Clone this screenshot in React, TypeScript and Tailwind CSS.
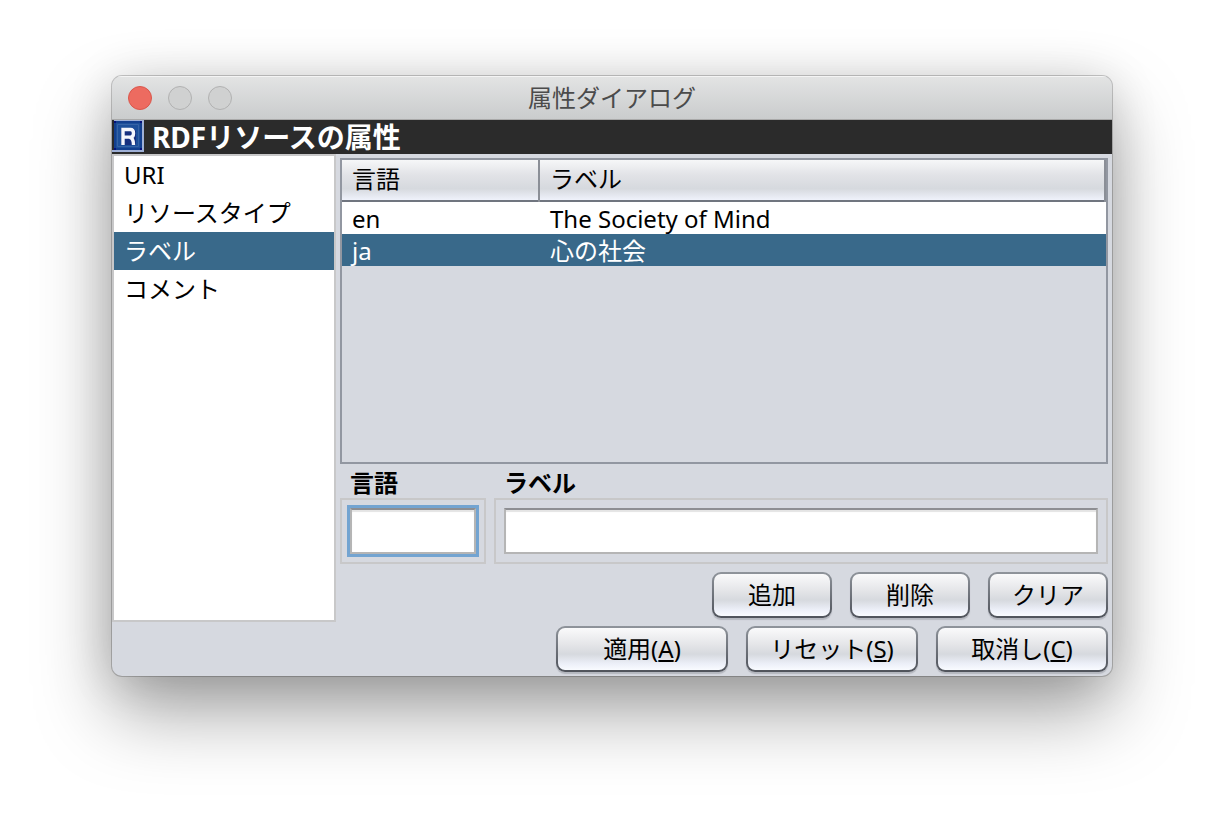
import { useState } from "react";
import type { ReactNode } from "react";

const sections = ["URI", "リソースタイプ", "ラベル", "コメント"];

const rows = [
  { lang: "en", label: "The Society of Mind" },
  { lang: "ja", label: "心の社会" },
];

function PushButton({ wide, children }: { wide?: boolean; children: ReactNode }) {
  return (
    <button
      type="button"
      className={
        "h-[46px] rounded-[9px] bg-linear-to-b from-[#8f949b] to-[#4f535b] p-[2px] shadow-[0_2px_1px_#b4b7bf] " +
        (wide ? "w-[172px]" : "w-[120px]")
      }
    >
      <span className="flex h-full items-center justify-center rounded-[7px] bg-[linear-gradient(#fafafb_0%,#e4e5e8_40%,#d6d9de_62%,#eceff8_85%,#f9fbff_100%)] whitespace-nowrap">
        <span>{children}</span>
      </span>
    </button>
  );
}

function ResourceIcon() {
  return (
    <svg viewBox="0 0 32 32" className="size-8 shrink-0" aria-hidden="true">
      <path d="M2 0h30v32H0v-2h2z" fill="#9fb0d6" />
      <path d="M2 1h28v29H2z" fill="#1c4f9a" />
      <path d="M3 2h26v27H3z" fill="none" stroke="#123f8f" strokeWidth="2" />
      <path d="M5.500 4.500h21v22h-21z" fill="none" stroke="#3563a6" strokeWidth="1" />
      <path d="M2 1h2v2H2zM28 1h2v2h-2zM2 28h2v2H2zM28 28h2v2h-2z" fill="#05107a" />
      <path d="M9 8h12l3 3v14H9z" fill="#16307f" />
      <path d="M11 25V9.500h7.500q3 0 3 3.800t-3 3.800H11M17.500 17.200q4 .5 4 7.800" fill="none" stroke="#f4f6fc" strokeWidth="3.400" />
    </svg>
  );
}

export default function App() {
  const [section, setSection] = useState("ラベル");
  const [selected, setSelected] = useState("ja");

  return (
    <main className="flex min-h-screen bg-white px-28 pt-[76px] pb-[148px] font-['Noto_Sans','Noto_Sans_CJK_JP',sans-serif] text-2xl leading-8 text-black">
      <section
        aria-labelledby="dialog-title"
        className="flex flex-1 flex-col overflow-hidden rounded-[10px] bg-[#d6d9e0] shadow-[0_0_0_1px_rgba(0,0,0,0.2),0_36px_76px_rgba(0,0,0,0.36),0_4px_48px_rgba(0,0,0,0.14)]"
      >
        <header className="grid h-11 shrink-0 grid-cols-[1fr_auto_1fr] items-center border-b border-[#a9a9a9] bg-linear-to-b from-[#e3e4e4] to-[#cacccd] px-4 shadow-[inset_0_1px_0_#f4f4f4]">
          <div className="flex gap-4">
            <button type="button" aria-label="閉じる" className="size-6 rounded-full border border-[#d9574c] bg-[#ed6b60]" />
            <button type="button" aria-label="しまう" className="size-6 rounded-full border border-[#b1b1b1] bg-[#d0d1d1]" />
            <button type="button" aria-label="拡大" className="size-6 rounded-full border border-[#b1b1b1] bg-[#d0d1d1]" />
          </div>
          <h1 id="dialog-title" className="text-[#4b4b4b]">属性ダイアログ</h1>
        </header>

        <div className="flex h-[34px] shrink-0 items-start gap-2 bg-[#2b2b2b] text-white">
          <ResourceIcon />
          <h2 className="text-[28px] leading-[34px] font-bold">RDFリソースの属性</h2>
        </div>

        <div className="flex flex-1">
          <nav className="w-56 shrink-0 border-2 border-[#c8c8c9] bg-white">
            <ul>
              {sections.map((name) => (
                <li key={name}>
                  <button
                    type="button"
                    onClick={() => setSection(name)}
                    aria-current={name === section}
                    className={
                      "h-[38px] w-full px-[10px] text-left " +
                      (name === section ? "bg-[#39698a] text-white" : "")
                    }
                  >
                    {name}
                  </button>
                </li>
              ))}
            </ul>
          </nav>

          <div className="flex flex-1 flex-col pt-1 pr-1 pl-1">
            <div className="flex-1 border-2 border-[#9297a1]">
              <table className="w-full table-fixed border-collapse text-left">
                <thead>
                  <tr className="h-[42px] bg-[linear-gradient(#f6f7f8_0%,#e2e3e7_35%,#d6d9de_68%,#eff2fb_95%,#70757f_95%)]">
                    <th scope="col" className="w-[198px] p-0 font-normal">
                      <div className="h-[42px] border-r-2 border-[#8b8f97] px-[10px] pt-[3px]">言語</div>
                    </th>
                    <th scope="col" className="p-0 font-normal">
                      <div className="h-[42px] border-r-2 border-[#8b8f97] px-[10px] pt-[3px]">ラベル</div>
                    </th>
                  </tr>
                </thead>
                <tbody>
                  {rows.map((row) => (
                    <tr
                      key={row.lang}
                      onClick={() => setSelected(row.lang)}
                      className={row.lang === selected ? "bg-[#39698a] text-white" : "bg-white"}
                    >
                      <td className="h-8 px-[10px] pt-[2px] pb-0 leading-[30px]">{row.lang}</td>
                      <td className="h-8 px-[10px] pt-[2px] pb-0 leading-[30px]">{row.label}</td>
                    </tr>
                  ))}
                </tbody>
              </table>
            </div>

            <div className="flex gap-2 pt-1">
              <div className="w-[146px]">
                <label htmlFor="lang" className="block px-[10px] leading-[30px] font-bold">言語</label>
                <div className="border-2 border-[#c8c8c9] p-2">
                  <input
                    id="lang"
                    type="text"
                    className="block h-[46px] w-full border-2 border-[#b5b5b5] border-t-[#8d8e92] bg-white px-2 shadow-[inset_0_2px_1px_#e4e4e4,0_0_0_3px_#73a4d1] outline-none"
                  />
                </div>
              </div>
              <div className="flex-1">
                <label htmlFor="label" className="block px-[10px] leading-[30px] font-bold">ラベル</label>
                <div className="border-2 border-[#c8c8c9] p-2">
                  <input
                    id="label"
                    type="text"
                    className="block h-[46px] w-full border-2 border-[#b5b5b5] border-t-[#8d8e92] bg-white px-2 shadow-[inset_0_2px_1px_#e4e4e4] outline-none"
                  />
                </div>
              </div>
            </div>

            <div className="flex justify-end gap-[18px] pt-2 pb-1">
              <PushButton>追加</PushButton>
              <PushButton>削除</PushButton>
              <PushButton>クリア</PushButton>
            </div>
          </div>
        </div>

        <footer className="flex justify-end gap-[18px] px-1 pt-1 pb-1">
          <PushButton wide>適用(<u>A</u>)</PushButton>
          <PushButton wide>リセット(<u>S</u>)</PushButton>
          <PushButton wide>取消し(<u>C</u>)</PushButton>
        </footer>
      </section>
    </main>
  );
}
